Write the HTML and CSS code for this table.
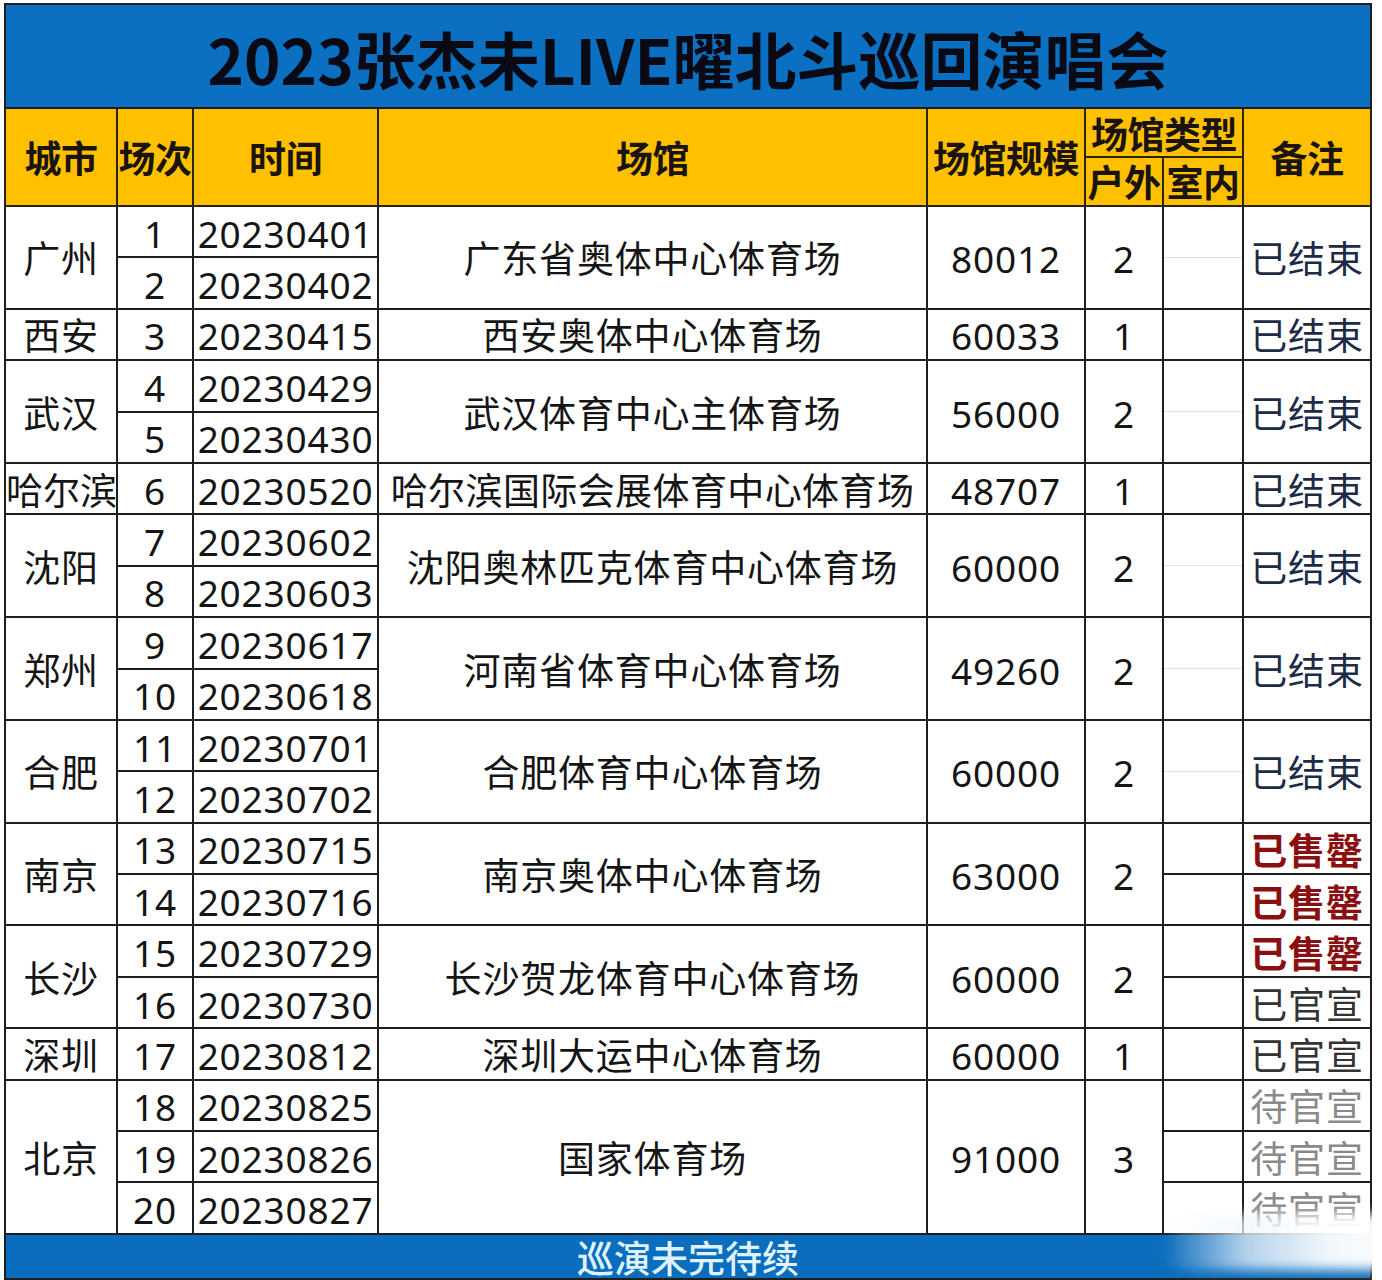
FILE: index.html
```html
<!DOCTYPE html>
<html lang="zh-CN">
<head>
<meta charset="utf-8">
<title>2023张杰未LIVE曜北斗巡回演唱会</title>
<link rel="stylesheet" href="styles.css">
</head>
<body>
<div class="sheet">
  <table class="tour">
    <colgroup>
      <col class="c-city"><col class="c-no"><col class="c-date"><col class="c-venue">
      <col class="c-cap"><col class="c-out"><col class="c-in"><col class="c-note">
    </colgroup>
    <thead>
      <tr class="title"><th colspan="8">2023张杰未LIVE曜北斗巡回演唱会</th></tr>
      <tr class="hd1">
        <th rowspan="2">城市</th><th rowspan="2">场次</th><th rowspan="2">时间</th><th rowspan="2">场馆</th>
        <th rowspan="2">场馆规模</th><th colspan="2" class="type">场馆类型</th><th rowspan="2">备注</th>
      </tr>
      <tr class="hd2"><th>户外</th><th>室内</th></tr>
    </thead>
    <tbody>
      <tr><td rowspan="2">广州</td><td>1</td><td>20230401</td><td rowspan="2">广东省奥体中心体育场</td><td rowspan="2">80012</td><td rowspan="2">2</td><td class="s1"></td><td rowspan="2" class="done">已结束</td></tr>
      <tr><td>2</td><td>20230402</td><td class="s2"></td></tr>

      <tr><td>西安</td><td>3</td><td>20230415</td><td>西安奥体中心体育场</td><td>60033</td><td>1</td><td></td><td class="done">已结束</td></tr>

      <tr><td rowspan="2">武汉</td><td>4</td><td>20230429</td><td rowspan="2">武汉体育中心主体育场</td><td rowspan="2">56000</td><td rowspan="2">2</td><td class="s1"></td><td rowspan="2" class="done">已结束</td></tr>
      <tr><td>5</td><td>20230430</td><td class="s2"></td></tr>

      <tr><td class="tight">哈尔滨</td><td>6</td><td>20230520</td><td class="long">哈尔滨国际会展体育中心体育场</td><td>48707</td><td>1</td><td></td><td class="done">已结束</td></tr>

      <tr><td rowspan="2">沈阳</td><td>7</td><td>20230602</td><td rowspan="2">沈阳奥林匹克体育中心体育场</td><td rowspan="2">60000</td><td rowspan="2">2</td><td class="s1"></td><td rowspan="2" class="done">已结束</td></tr>
      <tr><td>8</td><td>20230603</td><td class="s2"></td></tr>

      <tr><td rowspan="2">郑州</td><td>9</td><td>20230617</td><td rowspan="2">河南省体育中心体育场</td><td rowspan="2">49260</td><td rowspan="2">2</td><td class="s1"></td><td rowspan="2" class="done">已结束</td></tr>
      <tr><td>10</td><td>20230618</td><td class="s2"></td></tr>

      <tr><td rowspan="2">合肥</td><td>11</td><td>20230701</td><td rowspan="2">合肥体育中心体育场</td><td rowspan="2">60000</td><td rowspan="2">2</td><td class="s1"></td><td rowspan="2" class="done">已结束</td></tr>
      <tr><td>12</td><td>20230702</td><td class="s2"></td></tr>

      <tr><td rowspan="2">南京</td><td>13</td><td>20230715</td><td rowspan="2">南京奥体中心体育场</td><td rowspan="2">63000</td><td rowspan="2">2</td><td></td><td class="sold">已售罄</td></tr>
      <tr><td>14</td><td>20230716</td><td></td><td class="sold">已售罄</td></tr>

      <tr><td rowspan="2">长沙</td><td>15</td><td>20230729</td><td rowspan="2">长沙贺龙体育中心体育场</td><td rowspan="2">60000</td><td rowspan="2">2</td><td></td><td class="sold">已售罄</td></tr>
      <tr><td>16</td><td>20230730</td><td></td><td class="ann">已官宣</td></tr>

      <tr><td>深圳</td><td>17</td><td>20230812</td><td>深圳大运中心体育场</td><td>60000</td><td>1</td><td></td><td class="ann">已官宣</td></tr>

      <tr><td rowspan="3">北京</td><td>18</td><td>20230825</td><td rowspan="3">国家体育场</td><td rowspan="3">91000</td><td rowspan="3">3</td><td></td><td class="wait">待官宣</td></tr>
      <tr><td>19</td><td>20230826</td><td></td><td class="wait">待官宣</td></tr>
      <tr><td>20</td><td>20230827</td><td></td><td class="wait">待官宣</td></tr>
    </tbody>
    <tfoot>
      <tr class="foot"><td colspan="8">巡演未完待续</td></tr>
    </tfoot>
  </table>
  <div class="watermark"></div>
</div>
</body>
</html>
```

FILE: styles.css
```css
html, body {
  margin: 0;
  padding: 0;
  background: #ffffff;
}

body {
  font-family: "Noto Sans", "Noto Sans CJK SC", sans-serif;
  color: #111111;
}

.sheet {
  position: relative;
  width: 1382px;
  height: 1280px;
  overflow: hidden;
  padding: 3px 0 0 4px;
  box-sizing: border-box;
}

.tour {
  border-collapse: collapse;
  table-layout: fixed;
  width: 1368px;
}

.c-city { width: 112px; }
.c-no { width: 76px; }
.c-date { width: 185px; }
.c-venue { width: 549px; }
.c-cap { width: 158px; }
.c-out { width: 78px; }
.c-in { width: 80px; }
.c-note { width: 128px; }

.tour th,
.tour td {
  border: 2px solid #1e1e1e;
  padding: 0;
  text-align: center;
  vertical-align: middle;
  white-space: nowrap;
  overflow: visible;
  line-height: 1;
}

.title th {
  height: 98px;
  background: #0b70c2;
  font-family: "Noto Sans CJK SC", "Noto Sans", sans-serif;
  font-size: 62px;
  font-weight: 700;
  color: #0a0a14;
  letter-spacing: 0;
  padding-top: 4px;
}

.hd1 th,
.hd2 th {
  background: #ffc000;
  font-family: "Noto Sans CJK SC", sans-serif;
  font-size: 37px;
  font-weight: 700;
  color: #1a1410;
  border-color: #2a2418;
  letter-spacing: -0.5px;
}

.hd1 th { height: 45px; }
.hd2 th { height: 47px; }
.hd1 th.type { padding-top: 2px; }

.tour tbody td {
  height: 46.4px;
  font-size: 37px;
  color: #151515;
  padding-top: 3px;
  background: #ffffff;
  letter-spacing: 0.8px;
}

.tour tbody td.tight {
  letter-spacing: 0;
}

.tour tbody td.long {
  letter-spacing: 0.4px;
}

.tour tbody td.s1 {
  border-bottom: 1px solid #e2e2e2;
}

.tour tbody td.s2 {
  border-top: 1px solid #e2e2e2;
}

.tour tbody td.done {
  color: #1c2b48;
}

.tour tbody td.sold {
  color: #8a0f10;
  font-weight: 700;
  font-family: "Noto Sans CJK SC", sans-serif;
}

.tour tbody td.ann {
  color: #333333;
}

.tour tbody td.wait {
  color: #8a8a8a;
}

.foot td {
  height: 41px;
  background: #0b6dbd;
  color: #dff3ff;
  font-family: "Noto Sans CJK SC", sans-serif;
  font-size: 37px;
  font-weight: 500;
  padding-top: 2px;
  overflow: hidden;
}

.watermark {
  position: absolute;
  left: 1163px;
  top: 1214px;
  width: 240px;
  height: 56px;
  background: linear-gradient(to right, rgba(255, 255, 255, 0) 0%, rgba(240, 246, 252, 0.75) 35%, rgba(255, 255, 255, 0.95) 70%, #ffffff 100%);
  filter: blur(6px);
  border-radius: 20px 0 0 20px;
}
```
